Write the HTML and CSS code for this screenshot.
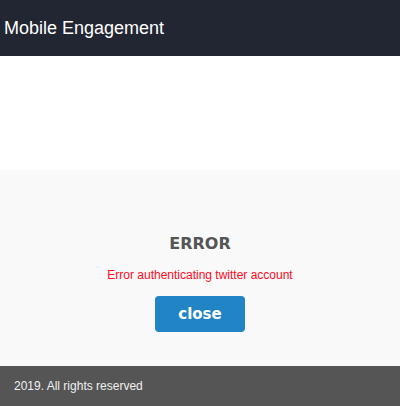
FILE: index.html
```html
<!DOCTYPE html>
<html lang="en">
<head>
    <meta charset="UTF-8">
    <meta name="viewport" content="width=device-width, initial-scale=1.0">
    <title>Mobile Engagement</title>
    <link rel="stylesheet" href="styles.css">
</head>
<body>
    <header class="header">
        <div class="brand">Mobile Engagement</div>
    </header>

    <div class="banner"></div>

    <div class="content">
        <div class="error-box">
            <h2 class="error-title">ERROR</h2>
            <p class="error-text">Error authenticating twitter account</p>
            <button type="button" class="close-btn">close</button>
        </div>
    </div>

    <footer class="footer">2019. All rights reserved</footer>
</body>
</html>
```

FILE: styles.css
```css
body, html {
    margin: 0;
    padding: 0;
    font-family: "Liberation Sans", Arial, sans-serif;
    background-color: #ffffff;
}

.header {
    height: 56px;
    background-color: #222633;
    display: flex;
    align-items: center;
    padding-left: 4px;
}

.brand {
    color: #ffffff;
    font-size: 18px;
}

.banner {
    height: 114px;
    background-color: #ffffff;
}

.content {
    height: 196px;
    background-color: #f9f9f9;
    display: flex;
    justify-content: center;
}

.error-box {
    padding-top: 63px;
    display: flex;
    flex-direction: column;
    align-items: center;
}

.error-title {
    margin: 0;
    font-family: "DejaVu Sans", sans-serif;
    font-weight: bold;
    font-size: 16px;
    line-height: 22px;
    color: #555555;
}

.error-text {
    margin: 13px 0 0;
    font-size: 12px;
    color: #ff0a1e;
}

.close-btn {
    margin-top: 14px;
    width: 90px;
    height: 36px;
    background-color: #2185c5;
    color: #ffffff;
    border: none;
    border-radius: 4px;
    font-family: "DejaVu Sans", sans-serif;
    font-weight: bold;
    font-size: 15px;
    cursor: pointer;
}

.footer {
    height: 40px;
    background-color: #555555;
    color: #f0f0f0;
    font-size: 12px;
    display: flex;
    align-items: center;
    padding-left: 14px;
}
```
